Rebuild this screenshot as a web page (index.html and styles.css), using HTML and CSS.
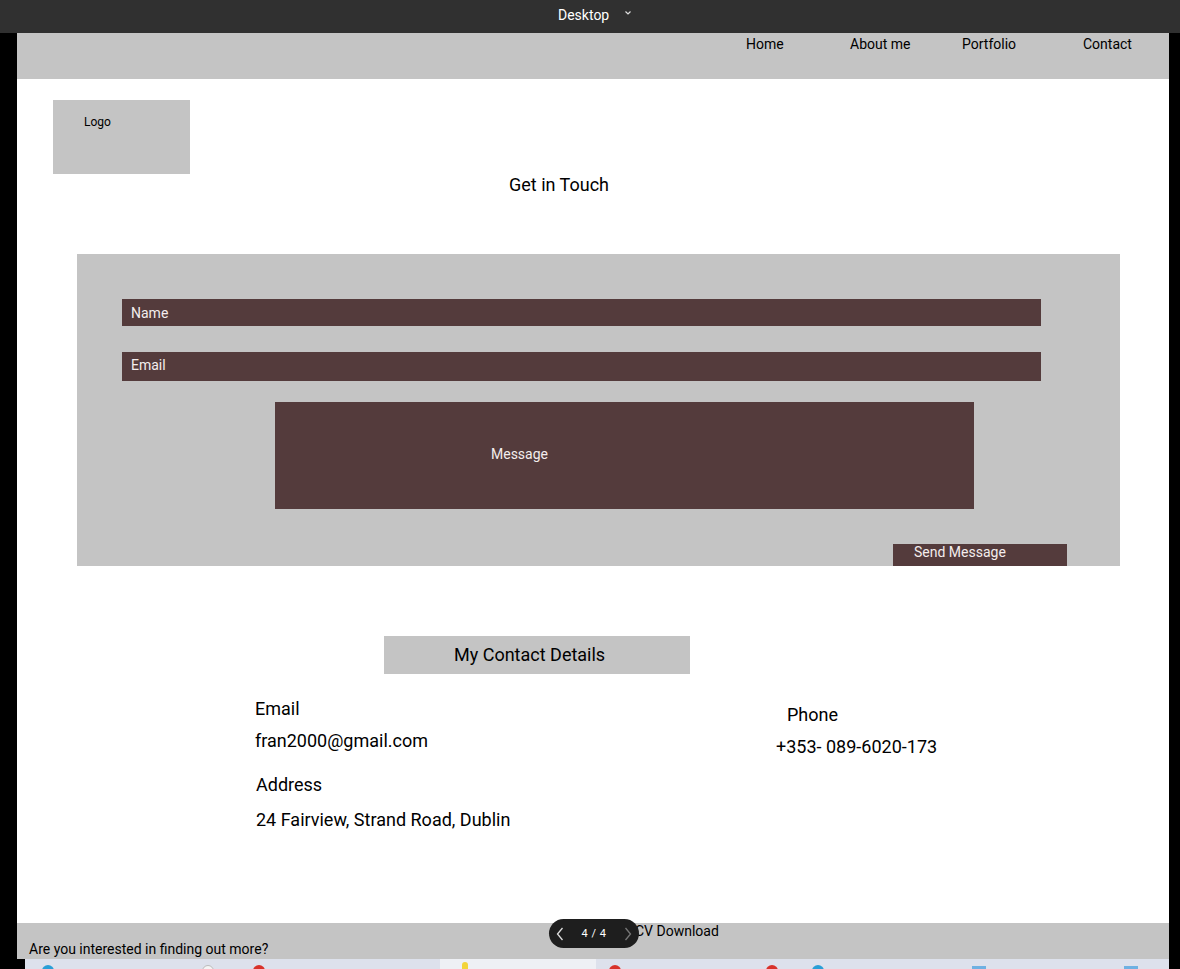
FILE: index.html
```html
<!DOCTYPE html>
<html>
<head>
<meta charset="utf-8">
<link rel="stylesheet" href="styles.css">
</head>
<body>
<div class="topbar"><span class="device">Desktop</span><svg class="chev" width="8" height="6" viewBox="0 0 8 6"><path d="M1.5 1.5 L4 4 L6.5 1.5" fill="none" stroke="#ddd" stroke-width="1.2"/></svg></div>
<div class="page">
  <nav class="nav">
    <div class="links">
      <span>Home</span><span>About me</span><span>Portfolio</span><span>Contact</span>
    </div>
  </nav>
  <main class="main">
    <div class="logo">Logo</div>
    <h1 class="title">Get in Touch</h1>
    <form class="form">
      <div class="field name">Name</div>
      <div class="field email">Email</div>
      <div class="message">Message</div>
      <div class="send">Send Message</div>
    </form>
    <h2 class="details-head">My Contact Details</h2>
    <div class="details">
      <div class="col-left">
        <div class="lbl">Email</div>
        <div class="val">fran2000@gmail.com</div>
        <div class="lbl addr">Address</div>
        <div class="val addr-val">24 Fairview, Strand Road, Dublin</div>
      </div>
      <div class="col-right">
        <div class="lbl phone">Phone</div>
        <div class="val">+353- 089-6020-173</div>
      </div>
    </div>
  </main>
  <footer class="footer">
    <span class="cv">CV Download</span>
    <span class="more">Are you interested in finding out more?</span>
    <div class="pager">
      <svg width="8" height="14" viewBox="0 0 8 14"><path d="M6.5 1 L1.5 7 L6.5 13" fill="none" stroke="#ddd" stroke-width="1.3"/></svg>
      <span class="count">4 / 4</span>
      <svg width="8" height="14" viewBox="0 0 8 14"><path d="M1.5 1 L6.5 7 L1.5 13" fill="none" stroke="#777" stroke-width="1.3"/></svg>
    </div>
  </footer>
</div>
<div class="taskbar">
  <div class="seg a"><i class="dot blue d1"></i><i class="dot white d2"></i><i class="dot red d3"></i></div>
  <div class="seg b"><i class="dot yellow d4"></i></div>
  <div class="seg c"><i class="dot red d5"></i><i class="dot red d6"></i><i class="dot blue d7"></i><i class="sq d8"></i><i class="sq d9"></i></div>
</div>
</body>
</html>
```
FILE: styles.css
```css
* { box-sizing: border-box; }
html, body { margin: 0; padding: 0; }
body {
  background: #000;
  font-family: Roboto, "Liberation Sans", Arial, sans-serif;
  color: #000;
  width: 1180px;
  height: 969px;
  overflow: hidden;
}
.topbar {
  height: 33px;
  background: #303030;
  display: flex;
  align-items: center;
  padding-left: 558px;
  color: #fff;
  font-size: 14px;
  padding-bottom: 3px;
}
.chev { margin-left: 15px; margin-top: -4px; }
.page {
  margin: 0 11px 0 17px;
  background: #fff;
  position: relative;
}
.nav {
  height: 46px;
  background: #c4c4c4;
  display: flex;
  justify-content: flex-end;
}
.links {
  display: grid;
  grid-template-columns: 104px 112px 121px 86px;
  font-size: 14px;
  line-height: 22px;
}
.main {
  height: 844px;
  padding-top: 21px;
}
.logo {
  margin-left: 36px;
  width: 137px;
  height: 74px;
  background: #c4c4c4;
  font-size: 12px;
  padding: 15px 0 0 31px;
}
.title {
  margin: 0;
  font-weight: 400;
  font-size: 18px;
  line-height: 22px;
  padding-left: 492px;
}
.form {
  margin: 58px 0 0 60px;
  width: 1043px;
  height: 312px;
  background: #c4c4c4;
  padding: 45px 0 0 45px;
  display: flex;
  flex-direction: column;
  align-items: flex-start;
}
.field {
  width: 919px;
  background: #543b3c;
  color: #f3eded;
  font-size: 14px;
  padding-left: 9px;
  display: flex;
  align-items: center;
}
.name { height: 27px; }
.email { height: 29px; margin-top: 26px; padding-bottom: 4px; }
.message {
  margin: 21px 0 0 153px;
  width: 699px;
  height: 107px;
  background: #543b3c;
  color: #f3eded;
  font-size: 14px;
  display: flex;
  align-items: center;
  padding: 0 0 4px 216px;
}
.send {
  margin: 35px 0 0 771px;
  width: 174px;
  height: 22px;
  background: #543b3c;
  color: #f3eded;
  font-size: 14px;
  padding: 0 0 0 21px;
}
.details-head {
  margin: 70px 0 0 367px;
  width: 306px;
  height: 38px;
  background: #c4c4c4;
  font-weight: 400;
  font-size: 18px;
  display: flex;
  align-items: center;
  padding: 0 0 2px 70px;
}
.details {
  display: flex;
  font-size: 18px;
  line-height: 22px;
}
.col-left { margin-left: 238px; margin-top: 24px; width: 521px; }
.col-right { margin-top: 30px; }
.lbl, .val { white-space: nowrap; }
.col-left .val { margin-top: 10px; }
.addr { margin-top: 22px; padding-left: 1px; }
.addr-val { padding-left: 1px; margin-top: 13px !important; }
.phone { padding-left: 11px; }
.col-right .val { margin-top: 10px; }
.footer {
  height: 36px;
  background: #c4c4c4;
  position: relative;
  font-size: 14px;
}
.cv { position: absolute; left: 618px; top: 0px; line-height: 16px; }
.more { position: absolute; left: 12px; top: 18px; line-height: 16px; }
.pager {
  position: absolute;
  left: 532px;
  top: -4px;
  width: 90px;
  height: 29px;
  border-radius: 15px;
  background: #1e1e1e;
  display: flex;
  align-items: center;
  justify-content: space-between;
  padding: 0 7px;
  color: #fff;
  font-size: 11px;
}
.count { letter-spacing: 0.5px; }
.taskbar {
  height: 10px;
  margin: 0 11px 0 25px;
  display: flex;
  overflow: hidden;
}
.seg { position: relative; height: 10px; background: #dde1ec; }
.seg.a { width: 415px; }
.seg.b { width: 156px; background: #eef0f5; }
.seg.c { flex: 1; }
.dot { position: absolute; top: 6px; width: 12px; height: 12px; border-radius: 50%; }
.blue { background: #2a9fd6; }
.white { background: #f4f4f4; border: 1px solid #bbb; }
.red { background: #d8322a; }
.yellow { background: #f2d43a; width: 6px; height: 10px; top: 3px; border-radius: 3px 3px 0 0; }
.sq { position: absolute; top: 7px; width: 14px; height: 6px; background: #6fb1e2; }
.d1 { left: 17px; }
.d2 { left: 177px; }
.d3 { left: 228px; }
.d4 { left: 22px; }
.d5 { left: 13px; }
.d6 { left: 170px; }
.d7 { left: 216px; }
.d8 { left: 376px; }
.d9 { left: 528px; }
```
